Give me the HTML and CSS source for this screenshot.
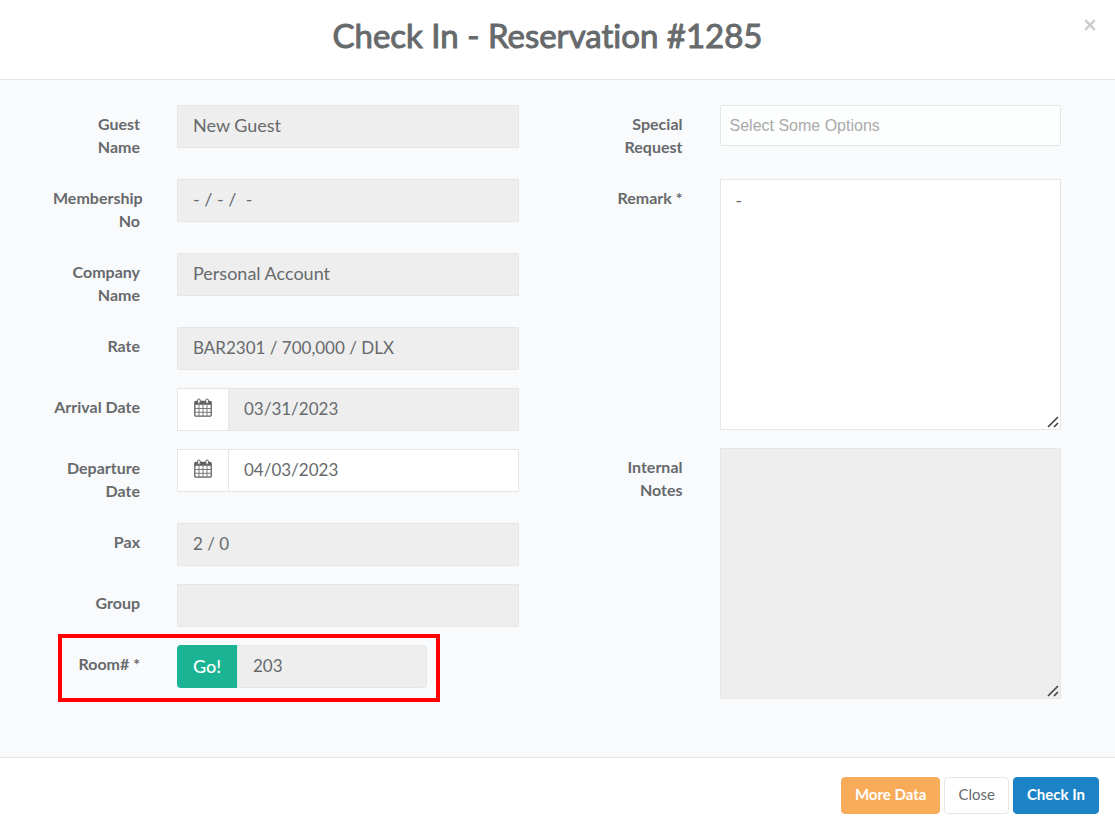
FILE: index.html
```
<!DOCTYPE html>
<html lang="en">
<head>
<meta charset="utf-8">
<title>Check In - Reservation #1285</title>
<link rel="stylesheet" href="styles.css">
</head>
<body>
<form class="modal">
  <header class="modal-header">
    <h1 class="modal-title">Check In - Reservation #1285</h1>
    <button class="dismiss" type="button" aria-label="Dismiss">
      <svg width="12" height="12" viewBox="0 0 12 12"><path d="M1.2 1.2 10.8 10.8M10.8 1.2 1.2 10.8" stroke="currentColor" stroke-width="2.4" fill="none"/></svg>
    </button>
  </header>

  <svg class="symbols" aria-hidden="true">
    <symbol id="calendar" viewBox="0 0 18 19">
      <path d="M2 3.5h14a1.2 1.2 0 0 1 1.2 1.2V17a1.2 1.2 0 0 1-1.2 1.2H2A1.2 1.2 0 0 1 .8 17V4.700A1.200 1.200 0 0 1 2 3.500z" fill="#fff" stroke="#5f6062" stroke-width="1.300"/>
      <path d="M.8 3.200h16.400v3.600H.8z" fill="#5f6062"/>
      <path d="M1 10.500h16M1 14.300h16M5 7v11M9 7v11M13 7v11" stroke="#77787a" stroke-width="1" fill="none"/>
      <rect x="3.600" y="1" width="2.600" height="4.400" rx="1.200" fill="#fff" stroke="#5f6062"/>
      <rect x="11.800" y="1" width="2.600" height="4.400" rx="1.200" fill="#fff" stroke="#5f6062"/>
    </symbol>
    <symbol id="grip" viewBox="0 0 12 12">
      <path d="M1 11 11 1M7 11 11 7" stroke="#444" stroke-width="1.700" fill="none"/>
    </symbol>
  </svg>

  <main class="modal-body">
    <div class="column">
      <div class="row">
        <label class="label" for="guest">Guest Name</label>
        <input class="field" id="guest" type="text" value="New Guest" readonly>
      </div>
      <div class="row">
        <label class="label" for="member">Membership No</label>
        <input class="field" id="member" type="text" value="- / - /&nbsp; -" readonly>
      </div>
      <div class="row">
        <label class="label" for="company">Company Name</label>
        <input class="field" id="company" type="text" value="Personal Account" readonly>
      </div>
      <div class="row">
        <label class="label" for="rate">Rate</label>
        <input class="field field-numeric" id="rate" type="text" value="BAR2301 / 700,000 / DLX" readonly>
      </div>
      <div class="row">
        <label class="label" for="arrival">Arrival Date</label>
        <div class="group">
          <span class="addon"><svg width="18" height="19"><use href="#calendar"/></svg></span>
          <input class="field field-numeric" id="arrival" type="text" value="03/31/2023" readonly>
        </div>
      </div>
      <div class="row">
        <label class="label" for="departure">Departure Date</label>
        <div class="group">
          <span class="addon"><svg width="18" height="19"><use href="#calendar"/></svg></span>
          <input class="field field-numeric" id="departure" type="text" value="04/03/2023">
        </div>
      </div>
      <div class="row">
        <label class="label" for="pax">Pax</label>
        <input class="field field-numeric" id="pax" type="text" value="2 / 0" readonly>
      </div>
      <div class="row">
        <label class="label" for="party">Group</label>
        <input class="field" id="party" type="text" value="" readonly>
      </div>
      <div class="row row-marked">
        <label class="label" for="room">Room# *</label>
        <div class="group group-short">
          <button class="go" type="button">Go!</button>
          <input class="field field-numeric field-end" id="room" type="text" value="203" readonly>
        </div>
      </div>
    </div>

    <div class="column">
      <div class="row">
        <label class="label" for="special">Special Request</label>
        <input class="options" id="special" type="text" placeholder="Select Some Options">
      </div>
      <div class="row">
        <label class="label" for="remark">Remark *</label>
        <div class="area-wrap">
          <textarea class="field area" id="remark">-</textarea>
          <svg class="grip" width="12" height="12"><use href="#grip"/></svg>
        </div>
      </div>
      <div class="row">
        <label class="label" for="notes">Internal Notes</label>
        <div class="area-wrap">
          <textarea class="field area" id="notes" readonly></textarea>
          <svg class="grip" width="12" height="12"><use href="#grip"/></svg>
        </div>
      </div>
    </div>
  </main>

  <footer class="modal-footer">
    <button class="btn btn-more" type="button">More Data</button>
    <button class="btn btn-close" type="button">Close</button>
    <button class="btn btn-check" type="submit">Check In</button>
  </footer>
</form>
</body>
</html>
```
FILE: styles.css
```
* {
  box-sizing: border-box;
}

body {
  margin: 0;
  background: #fff;
  color: #676a6c;
  font-family: Lato, "Open Sans", sans-serif;
  font-size: 18px;
  font-variant-ligatures: none;
}

button,
input,
textarea {
  margin: 0;
  font-family: inherit;
  color: inherit;
}

.symbols {
  display: none;
}

.modal-header {
  display: flex;
  align-items: flex-start;
  padding: 15px 15px 24px;
  border-bottom: 1px solid #e5e5e5;
}

.modal-title {
  flex: 1;
  margin: 0;
  font-size: 33px;
  line-height: 40px;
  font-weight: 400;
  -webkit-text-stroke: 1px #676a6c;
  text-align: center;
}

.dismiss {
  display: flex;
  padding: 4px;
  border: 0;
  background: none;
  color: #ccc;
}

.modal-body {
  display: grid;
  grid-template-columns: 1fr 1fr;
  column-gap: 74px;
  padding: 25px 54px 40px 50px;
  background: #f9fafc;
}

.row {
  display: grid;
  grid-template-columns: 90px minmax(0, 1fr);
  column-gap: 37px;
  align-items: start;
  margin-bottom: 18px;
}

.label {
  padding: 7px 0 3px 3px;
  font-size: 16px;
  line-height: 23px;
  font-weight: 700;
  text-align: right;
}

.field {
  display: block;
  width: 100%;
  height: 43px;
  padding: 4px 15px 7px;
  border: 1px solid #e5e6e7;
  border-radius: 1px;
  background: #fff;
  font-size: 18px;
  outline: 0;
}

.field:read-only {
  background: #eee;
}

.field-numeric {
  font-size: 17px;
}

.area-wrap {
  position: relative;
}

.area {
  height: 251px;
  padding: 8px 15px;
  line-height: 24px;
  resize: none;
}

.grip {
  position: absolute;
  right: 2px;
  bottom: 2px;
  pointer-events: none;
}

.group {
  display: flex;
}

.group .field {
  flex: 1;
  min-width: 0;
}

.group-short {
  width: 250px;
}

.addon {
  display: flex;
  align-items: center;
  justify-content: center;
  width: 52px;
  margin-right: -1px;
  padding-bottom: 4px;
  border: 1px solid #e5e6e7;
  background: #fff;
}

.go {
  width: 60px;
  padding: 0 0 2px;
  border: 0;
  border-radius: 4px 0 0 4px;
  background: #1ab394;
  color: #fff;
  font-size: 18px;
  font-weight: 500;
}

.field-end {
  border-radius: 0 4px 4px 0;
}

.row-marked {
  position: relative;
}

/* Frame drawn over the form to call out the room number */
.row-marked::after {
  content: "";
  position: absolute;
  inset: -11px 79px -14px 8px;
  border: 4px solid #fe0000;
  pointer-events: none;
}

.options {
  width: 100%;
  height: 41px;
  padding: 0 9px;
  border: 1px solid #e5e6e7;
  border-radius: 2px;
  background: #fdfefe;
  font-family: "Liberation Sans", Arial, sans-serif;
  font-size: 16px;
  outline: 0;
}

.options::placeholder {
  color: #aaa;
  opacity: 1;
}

.modal-footer {
  display: flex;
  justify-content: flex-end;
  gap: 4px;
  padding: 19px 16px 16px;
  border-top: 1px solid #e5e5e5;
}

.btn {
  height: 37px;
  padding: 0 13px 3px;
  border: 1px solid;
  border-radius: 4px;
  font-size: 15px;
}

.btn-more {
  border-color: #f8ac59;
  background: #f8ac59;
  color: #fff;
  font-weight: 700;
}

.btn-close {
  border-color: #e5e6e7;
  background: #fff;
}

.btn-check {
  border-color: #1c84c6;
  background: #1c84c6;
  color: #fff;
  font-weight: 700;
}
```
